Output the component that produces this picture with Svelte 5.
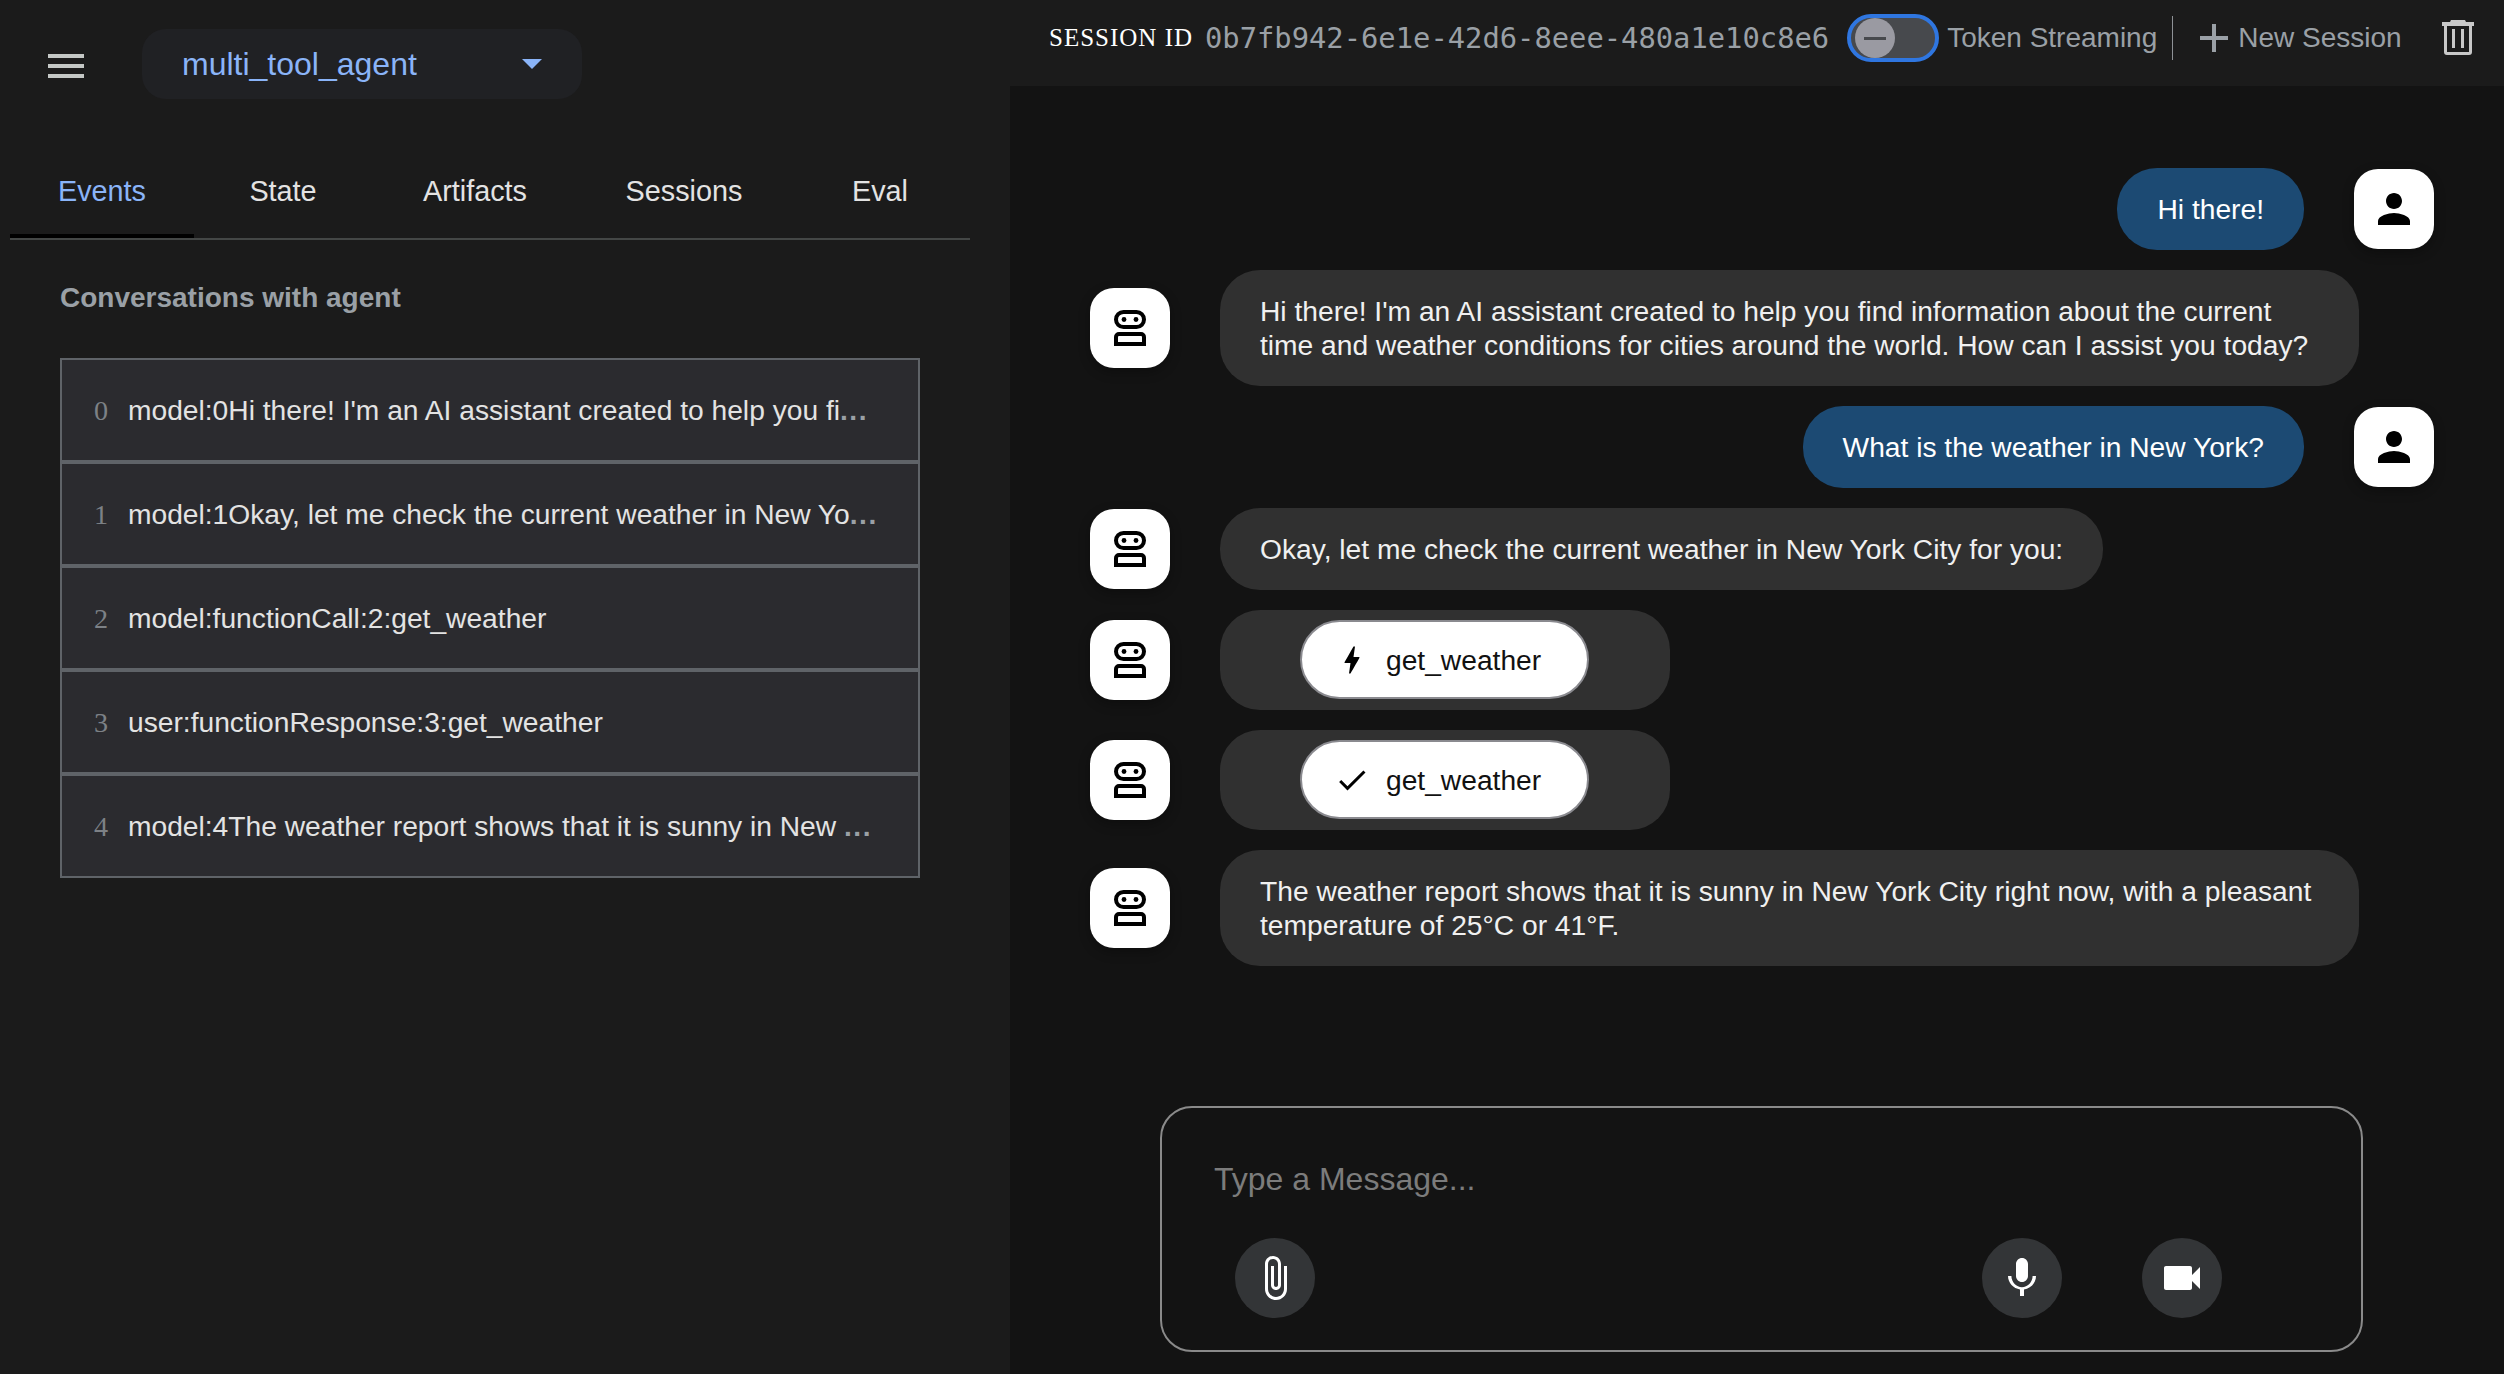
<script>
  const tabs = ["Events", "State", "Artifacts", "Sessions", "Eval"];
  const events = [
    { text: "model:0Hi there! I'm an AI assistant created to help you fi", cut: true },
    { text: "model:1Okay, let me check the current weather in New Yo", cut: true },
    { text: "model:functionCall:2:get_weather" },
    { text: "user:functionResponse:3:get_weather" },
    { text: "model:4The weather report shows that it is sunny in New ", cut: true },
  ];
  const messages = [
    { role: "user", text: "Hi there!" },
    { role: "bot", text: "Hi there! I'm an AI assistant created to help you find information about the current time and weather conditions for cities around the world. How can I assist you today?" },
    { role: "user", text: "What is the weather in New York?" },
    { role: "bot", text: "Okay, let me check the current weather in New York City for you:" },
    { role: "bot", tool: "call" },
    { role: "bot", tool: "response" },
    { role: "bot", text: "The weather report shows that it is sunny in New York City right now, with a pleasant temperature of 25°C or 41°F." },
  ];
</script>

{#snippet avatarBot()}
  <div class="avatar">
    <svg width="48" height="48" viewBox="0 0 48 48">
      <rect x="10" y="8" width="28" height="15" rx="7.5" fill="none" stroke="#000" stroke-width="4" />
      <circle cx="18" cy="15.5" r="2.4" />
      <circle cx="30" cy="15.5" r="2.4" />
      <path d="M10 40V33a3 3 0 0 1 3-3h22a3 3 0 0 1 3 3v7z" fill="none" stroke="#000" stroke-width="4" />
    </svg>
  </div>
{/snippet}

{#snippet avatarUser()}
  <div class="avatar">
    <svg width="48" height="48" viewBox="0 0 24 24">
      <path d="M12 12c2.21 0 4-1.79 4-4s-1.79-4-4-4-4 1.79-4 4 1.79 4 4 4zm0 2c-2.67 0-8 1.34-8 4v2h16v-2c0-2.66-5.33-4-8-4z" />
    </svg>
  </div>
{/snippet}

<div class="page">
  <aside class="sidebar">
    <div class="side-head">
      <svg class="menu" width="48" height="48" viewBox="0 0 24 24">
        <path d="M3 18h18v-2H3v2zm0-5h18v-2H3v2zm0-7v2h18V6H3z" />
      </svg>
      <div class="agent-select">
        <span>multi_tool_agent</span>
        <i class="caret"></i>
      </div>
    </div>

    <div class="tabs">
      {#each tabs as tab, i}
        <div class="tab" class:active={i === 0}>{tab}</div>
      {/each}
    </div>

    <h2 class="heading">Conversations with agent</h2>

    <div class="event-list">
      {#each events as ev, i}
        <div class="event">
          <span class="num">{i}</span>
          <div class="label">{ev.text}{#if ev.cut}<b>...</b>{/if}</div>
        </div>
      {/each}
    </div>
  </aside>

  <main class="chat">
    <header class="topbar">
      <span class="sid-label">SESSION ID</span>
      <span class="sid">0b7fb942-6e1e-42d6-8eee-480a1e10c8e6</span>
      <div class="toggle">
        <div class="thumb"><i></i></div>
      </div>
      <span class="grey">Token Streaming</span>
      <div class="vline"></div>
      <div class="new-session">
        <svg width="48" height="48" viewBox="0 0 24 24"><path d="M19 13h-6v6h-2v-6H5v-2h6V5h2v6h6v2z" /></svg>
        <span class="grey">New Session</span>
      </div>
      <svg class="trash" width="48" height="48" viewBox="0 0 48 48">
        <path d="M16 8l1-2h14l1 2h8v4H8V8z" />
        <path d="M10 12h3v26h22V12h3v26a3 3 0 0 1-3 3H13a3 3 0 0 1-3-3z" />
        <path d="M18 15h3v19h-3zM27 15h3v19h-3z" />
      </svg>
    </header>

    <section class="messages">
      {#each messages as m}
        <div class="row {m.role}">
          {#if m.role === "bot"}
            {@render avatarBot()}
          {/if}
          {#if m.tool}
            <div class="bubble tool">
              <div class="tool-btn">
                {#if m.tool === "call"}
                  <svg width="36" height="36" viewBox="0 0 24 24">
                    <path d="M11 21h-1l1-7H7.5c-.58 0-.57-.32-.38-.66.19-.34.05-.08.07-.12C8.48 10.94 10.42 7.54 13 3h1l-1 7h3.5c.49 0 .56.33.47.51l-.07.15C12.96 17.55 11 21 11 21z" />
                  </svg>
                {:else}
                  <svg width="36" height="36" viewBox="0 0 24 24">
                    <path d="M9 16.17L4.83 12l-1.42 1.41L9 19 21 7l-1.41-1.41z" />
                  </svg>
                {/if}
                <span>get_weather</span>
              </div>
            </div>
          {:else}
            <div class="bubble">{m.text}</div>
          {/if}
          {#if m.role === "user"}
            {@render avatarUser()}
          {/if}
        </div>
      {/each}
    </section>

    <div class="composer">
      <div class="placeholder">Type a Message...</div>
      <div class="actions">
        <button class="round" aria-label="Attach">
          <svg width="48" height="48" viewBox="0 0 24 24">
            <path d="M16.5 6v11.5c0 2.21-1.79 4-4 4s-4-1.79-4-4V5c0-1.38 1.12-2.5 2.5-2.5s2.5 1.12 2.5 2.5v10.5c0 .55-.45 1-1 1s-1-.45-1-1V6H10v9.5c0 1.38 1.12 2.5 2.5 2.5s2.5-1.12 2.5-2.5V5c0-2.21-1.79-4-4-4S7 2.79 7 5v12.5c0 3.04 2.46 5.5 5.5 5.5s5.5-2.46 5.5-5.5V6h-1.5z" />
          </svg>
        </button>
        <div class="spacer"></div>
        <button class="round" aria-label="Microphone">
          <svg width="48" height="48" viewBox="0 0 24 24">
            <path d="M12 14c1.66 0 2.99-1.34 2.99-3L15 5c0-1.66-1.34-3-3-3S9 3.34 9 5v6c0 1.66 1.34 3 3 3zm5.3-3c0 3-2.54 5.64-5.3 5.64S6.7 14 6.7 11H5c0 3.41 2.72 6.23 6 6.72V21h2v-3.28c3.28-.48 6-3.3 6-6.72h-1.7z" />
          </svg>
        </button>
        <button class="round" aria-label="Video">
          <svg width="48" height="48" viewBox="0 0 24 24">
            <path d="M17 10.5V7c0-.55-.45-1-1-1H4c-.55 0-1 .45-1 1v10c0 .55.45 1 1 1h12c.55 0 1-.45 1-1v-3.5l4 4v-11l-4 4z" />
          </svg>
        </button>
      </div>
    </div>
  </main>
</div>

<style>
  :global(body) {
    background: #131313;
    font-family: "Liberation Sans", Arial, sans-serif;
  }

  .page {
    display: flex;
    height: 1374px;
    overflow: hidden;
  }

  /* left panel */
  .sidebar {
    width: 1010px;
    flex-shrink: 0;
    background: #1b1b1b;
    color: #e3e3e3;
  }

  .side-head {
    display: flex;
    align-items: center;
    height: 70px;
    padding: 29px 0 0 42px;
  }

  .menu {
    fill: #c4c7c5;
    margin: 3px 52px 0 0;
  }

  .agent-select {
    display: flex;
    align-items: center;
    justify-content: space-between;
    width: 440px;
    height: 70px;
    box-sizing: border-box;
    padding: 0 40px;
    background: #202124;
    border-radius: 24px;
    color: #8ab4f8;
    font-size: 32px;
  }

  .caret {
    width: 0;
    height: 0;
    border-left: 10px solid transparent;
    border-right: 10px solid transparent;
    border-top: 10px solid #8ab4f8;
  }

  .tabs {
    display: grid;
    grid-template-columns: 184px 178px 206px 212px 180px;
    width: 960px;
    height: 96px;
    margin: 45px 0 0 10px;
    box-sizing: border-box;
    border-bottom: 2px solid #444746;
  }

  .tab {
    display: flex;
    align-items: center;
    justify-content: center;
    font-size: 28.8px;
    height: 94px;
    box-sizing: border-box;
  }

  .tab.active {
    color: #8ab4f8;
    box-shadow: inset 0 -4px 0 #000;
  }

  .heading {
    margin: 41px 0 0 60px;
    height: 39px;
    line-height: 34px;
    font-size: 28px;
    font-weight: 700;
    color: #9aa0a6;
  }

  .event-list {
    width: 860px;
    margin: 38px 0 0 60px;
  }

  .event {
    display: flex;
    align-items: center;
    height: 104px;
    box-sizing: border-box;
    padding-top: 1px;
    border: 2px solid #5f6368;
    background: #2b2b2f;
    font-size: 28.2px;
  }

  .num {
    width: 24px;
    margin: 0 15px 0 27px;
    text-align: center;
    font-family: "Liberation Serif", serif;
    color: #7d8186;
  }

  .label {
    white-space: pre;
  }

  .label b {
    color: #9aa0a6;
    letter-spacing: 1.5px;
  }

  /* right panel */
  .chat {
    flex: 1;
    min-width: 0;
    display: flex;
    flex-direction: column;
  }

  .topbar {
    display: flex;
    align-items: center;
    height: 76px;
    padding: 0 0 10px 39px;
    background: #1b1b1b;
    font-size: 28px;
  }

  .sid-label {
    width: 156px;
    font-family: "Liberation Serif", serif;
    font-size: 25px;
    letter-spacing: 1px;
    color: #fff;
    white-space: nowrap;
  }

  .sid {
    font-family: "DejaVu Sans Mono", monospace;
    font-size: 28.8px;
    color: #9aa0a6;
    white-space: nowrap;
  }

  .toggle {
    display: flex;
    align-items: center;
    width: 92px;
    height: 48px;
    box-sizing: border-box;
    margin: 0 8px 0 18px;
    padding-left: 4px;
    border: 4px solid #2f76e0;
    border-radius: 24px;
    background: #47494d;
  }

  .thumb {
    display: flex;
    align-items: center;
    justify-content: center;
    width: 40px;
    height: 40px;
    border-radius: 50%;
    background: #9a9aa2;
  }

  .thumb i {
    width: 22px;
    height: 3px;
    background: #47494d;
  }

  .grey {
    color: #9aa0a6;
    white-space: nowrap;
  }

  .vline {
    width: 1px;
    height: 44px;
    margin: 0 17px 0 15px;
    background: #8e9196;
  }

  .new-session {
    display: flex;
    align-items: center;
    fill: #9aa0a6;
  }

  .trash {
    margin-left: 32px;
    fill: #c8c8c8;
  }

  .messages {
    flex: 1;
    min-height: 0;
    display: flex;
    flex-direction: column;
    gap: 20px;
    padding: 82px 70px 0 80px;
  }

  .row {
    display: flex;
    align-items: center;
    gap: 50px;
  }

  .row.user {
    justify-content: flex-end;
  }

  .avatar {
    display: flex;
    align-items: center;
    justify-content: center;
    width: 80px;
    height: 80px;
    flex-shrink: 0;
    background: #fff;
    border-radius: 24px;
    box-shadow: 0 4px 12px rgba(0, 0, 0, 0.3);
  }

  .bubble {
    width: fit-content;
    max-width: 1139px;
    box-sizing: border-box;
    padding: 24px 40px;
    border-radius: 40px;
    background: #303030;
    color: #f0f0f0;
    font-size: 28.2px;
    line-height: 34px;
  }

  .row.user .bubble {
    background: #1c4a73;
    color: #fff;
  }

  .bubble.tool {
    width: 450px;
    padding: 10px 0 11px 80px;
  }

  .tool-btn {
    display: flex;
    align-items: center;
    gap: 16px;
    width: 289px;
    height: 79px;
    box-sizing: border-box;
    padding-left: 32px;
    border: 2px solid #8a8a8f;
    border-radius: 40px;
    background: #fff;
    color: #111;
  }

  .composer {
    width: 1203px;
    height: 246px;
    box-sizing: border-box;
    margin: 0 0 22px 150px;
    padding: 49px 0 0 52px;
    border: 2px solid #8a8a8a;
    border-radius: 32px;
  }

  .placeholder {
    font-size: 32px;
    line-height: 44px;
    color: #7c7c7c;
  }

  .actions {
    display: flex;
    gap: 80px;
    margin: 37px 0 0 21px;
    padding-right: 139px;
  }

  .spacer {
    flex: 1;
  }

  .round {
    display: flex;
    align-items: center;
    justify-content: center;
    width: 80px;
    height: 80px;
    padding: 0;
    border: none;
    border-radius: 50%;
    background: #333537;
    fill: #fff;
  }
</style>
